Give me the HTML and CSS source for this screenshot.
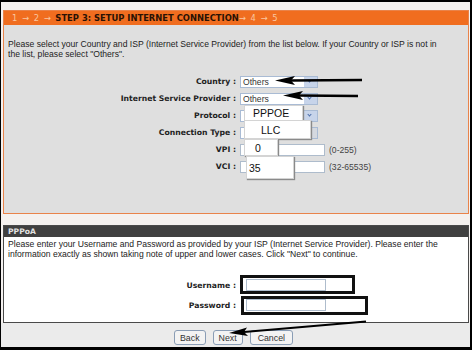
FILE: index.html
```html
<!DOCTYPE html>
<html lang="en">
<head>
	<meta charset="UTF-8">
	<title>Setup Internet Connection</title>
	<meta name="viewport" content="width=device-width, initial-scale=1">
	<link rel="stylesheet" href="styles.css">
</head>
<body>
<div class="frame">
	<section class="panel wizard">
		<h2 class="wizard-head"><span class="step-dim">1 &rarr; 2 &rarr;</span> <strong>STEP 3: SETUP INTERNET CONNECTION</strong><span class="step-dim">&rarr; 4 &rarr; 5</span></h2>
		<div class="wizard-body">
			<p class="intro intro-narrow">Please select your Country and ISP (Internet Service Provider) from the list below. If your Country or ISP is not in the list, please select "Others".</p>
			<div class="form-grid">
				<span class="label">Country :</span>
				<div class="field"><div class="select"><span>Others</span><i class="drop"></i></div></div>

				<span class="label">Internet Service Provider :</span>
				<div class="field"><div class="select"><span>Others</span><i class="drop"></i></div></div>

				<span class="label">Protocol :</span>
				<div class="field">
					<div class="select"><span></span><i class="drop"></i></div>
					<span class="patch patch-proto">PPPOE</span>
				</div>

				<span class="label">Connection Type :</span>
				<div class="field">
					<div class="select select-off"><span></span><i class="drop"></i></div>
					<span class="patch patch-conn">LLC</span>
				</div>

				<span class="label">VPI :</span>
				<div class="field">
					<input class="text-input" type="text">
					<span class="hint">(0-255)</span>
					<span class="patch patch-vpi">0</span>
				</div>

				<span class="label">VCI :</span>
				<div class="field">
					<input class="text-input" type="text">
					<span class="hint">(32-65535)</span>
					<span class="patch patch-vci">35</span>
				</div>
			</div><!--.form-grid end-->
		</div>
	</section>

	<section class="panel account">
		<h2 class="account-head">PPPoA</h2>
		<div class="account-body">
			<p class="intro">Please enter your Username and Password as provided by your ISP (Internet Service Provider). Please enter the information exactly as shown taking note of upper and lower cases. Click "Next" to continue.</p>
			<div class="form-grid login-grid">
				<span class="label">Username :</span>
				<div class="field">
					<input class="text-input login-input" type="text">
					<span class="mark mark-user"></span>
				</div>

				<span class="label">Password :</span>
				<div class="field">
					<input class="text-input login-input" type="password">
					<span class="mark mark-pass"></span>
				</div>
			</div>
		</div>
	</section>

	<div class="actions">
		<button type="button" class="btn">Back</button>
		<button type="button" class="btn">Next</button>
		<button type="button" class="btn btn-wide">Cancel</button>
	</div>

	<svg class="pointers" width="474" height="350" viewBox="0 0 474 350" aria-hidden="true">
		<path d="M362 80 L290 80.5" stroke="#000" stroke-width="2.4" fill="none"/>
		<path d="M275 80.5 L295 76 L291 80.5 L295 85 Z" fill="#000"/>
		<path d="M358 96 L298 95.5" stroke="#000" stroke-width="2.4" fill="none"/>
		<path d="M283 95.5 L303 91 L299 95.5 L303 100 Z" fill="#000"/>
		<path d="M366 321.5 L244 332" stroke="#000" stroke-width="2.2" fill="none"/>
		<path d="M229 333 L247 327.5 L244 332 L248 336 Z" fill="#000"/>
	</svg>
</div>
</body>
</html>
```

FILE: styles.css
```css
*,
::before,
::after {
	box-sizing: border-box;
}
body {
	margin: 0;
	background: #fff;
	font-family: "Liberation Sans", Arial, sans-serif;
	font-size: 8.6px;
	color: #222;
}
.frame {
	position: relative;
	width: 472px;
	height: 350px;
	padding: 8px 1px 0 2px;
	border-top: 2px solid #000;
	border-left: 1px solid #000;
	border-right: 2px solid #000;
	border-bottom: 3px solid #000;
	background: #f4f1ef;
	display: flex;
	flex-direction: column;
}
h2 {
	margin: 0;
}
p {
	margin: 0;
}

/* step 3 panel */
.wizard {
	height: 204px;
	border: 1px solid #e9834a;
	background: #dfdfdf;
}
.wizard-head {
	height: 14px;
	padding: 0 0 0 8px;
	background: #f06d1f;
	font-family: "DejaVu Sans", Verdana, sans-serif;
	font-size: 8.4px;
	line-height: 14px;
	font-weight: normal;
	word-spacing: 2px;
	white-space: nowrap;
	color: #fac6a0;
}
.wizard-head strong {
	color: #2a1204;
	font-weight: bold;
	word-spacing: 0;
}
.wizard-body {
	padding: 14px 10px 0 4px;
}
.intro {
	line-height: 10px;
}
.intro-narrow {
	max-width: 434px;
}

/* label / field rows */
.form-grid {
	display: grid;
	grid-template-columns: 228px 1fr;
	grid-auto-rows: 17px;
	column-gap: 4px;
	align-items: center;
	margin-top: 14px;
}
.label {
	text-align: right;
	font-family: "DejaVu Sans", Verdana, sans-serif;
	font-weight: bold;
	font-size: 7.7px;
	color: #222;
}
.field {
	position: relative;
	display: flex;
	align-items: center;
	gap: 4px;
	height: 100%;
}
.select {
	width: 78px;
	height: 12px;
	border: 1px solid #a9bbd4;
	background: #fff;
	display: flex;
	align-items: center;
	justify-content: space-between;
	padding-left: 2px;
	color: #333;
}
.drop {
	width: 13px;
	height: 10px;
	background: #c7d4ea;
	position: relative;
}
.drop::after {
	content: "";
	position: absolute;
	left: 4px;
	top: 2px;
	width: 3px;
	height: 3px;
	border-right: 1.5px solid #4d6fab;
	border-bottom: 1.5px solid #4d6fab;
	transform: rotate(45deg);
}
.select-off .drop {
	background: #d5d9e0;
}
.select-off .drop::after {
	border-color: #8d97a8;
}
.text-input {
	width: 85px;
	height: 12px;
	margin: 0;
	padding: 0;
	border: 1px solid #aebccc;
	background: #fff;
}
.hint {
	color: #444;
}

/* pasted-over values */
.patch {
	position: absolute;
	background: #fff;
	border: 1px solid #d4d4d4;
	box-shadow: 1px 1px 1px #8a8a8a;
	font-size: 10.5px;
	color: #111;
	display: flex;
	align-items: center;
}
.patch-proto {
	left: 4px;
	top: -2px;
	width: 59px;
	height: 16px;
	padding-left: 8px;
}
.patch-conn {
	left: 4px;
	top: -4px;
	width: 67px;
	height: 19px;
	padding-left: 16px;
}
.patch-vpi {
	left: 4px;
	top: -2px;
	width: 34px;
	height: 17px;
	padding-left: 10px;
}
.patch-vci {
	left: 6px;
	top: -2px;
	width: 48px;
	height: 23px;
	padding-left: 2px;
}

/* PPPoA panel */
.account {
	margin-top: 11px;
	height: 98px;
	border: 1px solid #4a4a4a;
	background: #fff;
}
.account-head {
	height: 11px;
	padding-left: 4px;
	background: #404040;
	color: #e2e2e2;
	font-family: "DejaVu Sans", Verdana, sans-serif;
	font-size: 7.6px;
	line-height: 11px;
}
.account-body {
	padding: 2px 10px 0 4px;
}
.login-grid {
	margin-top: 16px;
	grid-auto-rows: 20px;
}
.login-input {
	width: 80px;
	margin-left: 6px;
}
.mark {
	position: absolute;
	border: 3px solid #111;
}
.mark-user {
	left: 0;
	top: 0;
	width: 115px;
	height: 19px;
}
.mark-pass {
	left: 1px;
	top: 1px;
	width: 127px;
	height: 19px;
}

/* bottom buttons */
.actions {
	flex: 1;
	display: flex;
	justify-content: center;
	align-items: flex-start;
	gap: 7px;
	padding-top: 7px;
	padding-right: 4px;
	background: #ebebeb;
	margin: 0 -1px 0 -2px;
}
.btn {
	height: 15px;
	padding: 0 5px;
	border: 1px solid #8a9db5;
	border-radius: 3px;
	background: #f3f3f3;
	font-family: inherit;
	font-size: 8.8px;
	color: #333;
}
.btn-wide {
	padding: 0 7px;
}
.pointers {
	position: absolute;
	left: -1px;
	top: -2px;
	pointer-events: none;
}
```
